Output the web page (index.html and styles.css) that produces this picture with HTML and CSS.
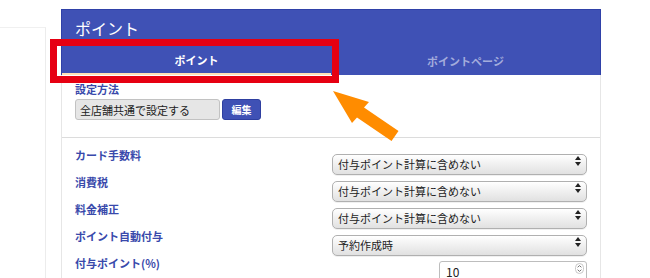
FILE: index.html
```html
<!DOCTYPE html>
<html lang="ja">
<head>
    <meta charset="UTF-8">
    <meta name="viewport" content="width=device-width, initial-scale=1.0">
    <title>ポイント</title>
    <link rel="stylesheet" href="styles.css">
</head>
<body>
    <div class="page">
        <aside class="side"></aside>

        <section class="card">
            <div class="card-head">
                <h1 class="card-title">ポイント</h1>
                <ul class="tabs">
                    <li class="tab active">ポイント</li>
                    <li class="tab">ポイントページ</li>
                </ul>
            </div>

            <div class="card-body">
                <div class="method">
                    <label class="field-label">設定方法</label>
                    <div class="method-row">
                        <input class="method-input" type="text" value="全店舗共通で設定する" readonly>
                        <button class="edit-btn">編集</button>
                    </div>
                </div>

                <div class="settings">
                    <div class="row">
                        <span class="field-label">カード手数料</span>
                        <div class="select-wrap">
                            <select><option>付与ポイント計算に含めない</option></select>
                            <span class="arrows"></span>
                        </div>
                    </div>
                    <div class="row">
                        <span class="field-label">消費税</span>
                        <div class="select-wrap">
                            <select><option>付与ポイント計算に含めない</option></select>
                            <span class="arrows"></span>
                        </div>
                    </div>
                    <div class="row">
                        <span class="field-label">料金補正</span>
                        <div class="select-wrap">
                            <select><option>付与ポイント計算に含めない</option></select>
                            <span class="arrows"></span>
                        </div>
                    </div>
                    <div class="row">
                        <span class="field-label">ポイント自動付与</span>
                        <div class="select-wrap">
                            <select><option>予約作成時</option></select>
                            <span class="arrows"></span>
                        </div>
                    </div>
                    <div class="row">
                        <span class="field-label">付与ポイント(%)</span>
                        <div class="number-wrap">
                            <input class="number-input" type="text" value="10">
                            <svg class="spin" width="9" height="11" viewBox="0 0 9 11">
                                <rect x="0.5" y="0.5" width="8" height="10" rx="4" fill="#fff" stroke="#c8c8c8"/>
                                <path d="M2.6 4.3 L4.5 2.6 L6.4 4.3 M2.6 6.7 L4.5 8.4 L6.4 6.7" fill="none" stroke="#666" stroke-width="0.9"/>
                            </svg>
                        </div>
                    </div>
                </div>
            </div>

            <div class="highlight"></div>
            <svg class="pointer" width="72" height="60" viewBox="0 0 72 60">
                <polygon points="2,2 38,13 33,18.6 67.5,42.1 60.5,51.9 26,28.4 21,34" fill="#ff8c00"/>
            </svg>
        </section>
    </div>
</body>
</html>
```

FILE: styles.css
```css
body {
    margin: 0;
    background-color: #fff;
    font-family: "Noto Sans CJK JP", "Noto Sans", sans-serif;
}
.page {
    display: flex;
    align-items: flex-start;
    gap: 15px;
}
.side {
    width: 45px;
    height: 260px;
    margin-top: 27px;
    border-top: 1px solid #f0f0f0;
    border-right: 1px solid #ececec;
}
.card {
    position: relative;
    width: 540px;
    margin-top: 9px;
}
.card-head {
    background-color: #3f51b5;
    border: 1px solid #2f41a8;
    border-bottom: none;
    padding-top: 8px;
}
.card-title {
    margin: 0 0 9px 13px;
    font-size: 16px;
    line-height: 20px;
    font-weight: normal;
    color: #fff;
}
.tabs {
    display: flex;
    list-style-type: none;
    margin: 0;
    padding: 0;
}
.tab {
    flex: 1;
    height: 28px;
    line-height: 28px;
    text-align: center;
    font-size: 11px;
    font-weight: bold;
    color: #a3acdc;
    box-sizing: border-box;
}
.tab.active {
    color: #fff;
    border-bottom: 2px solid #ffe2b8;
    line-height: 27px;
}
.card-body {
    border: 1px solid #e6e6e6;
    border-top: none;
    height: 210px;
}
.method {
    padding: 7px 13px 17px 13px;
    border-bottom: 1px solid #dcdcdc;
}
.field-label {
    display: block;
    font-size: 11px;
    line-height: 15px;
    font-weight: bold;
    color: #3949ab;
}
.method .field-label {
    margin-bottom: 2px;
}
.method-row {
    display: flex;
    gap: 2px;
}
.method-input {
    width: 145px;
    height: 21px;
    box-sizing: border-box;
    padding: 0 4px;
    font-family: inherit;
    font-size: 11px;
    color: #222;
    background-color: #e6e6e6;
    border: 1px solid #c2c2c2;
    border-radius: 3px;
}
.edit-btn {
    width: 39px;
    height: 21px;
    padding: 0;
    font-family: inherit;
    font-size: 10px;
    font-weight: bold;
    color: #fff;
    background-color: #3f51b5;
    border: 1px solid #2e3fa0;
    border-radius: 3px;
}
.settings {
    display: grid;
    grid-template-columns: 257px 1fr;
    row-gap: 6px;
    padding: 12px 13px 0 13px;
}
.row {
    display: contents;
}
.row .field-label {
    align-self: start;
    line-height: 10px;
}
.select-wrap {
    position: relative;
    height: 21px;
}
.select-wrap select {
    appearance: none;
    -webkit-appearance: none;
    width: 100%;
    height: 21px;
    box-sizing: border-box;
    padding: 0 20px 0 5px;
    font-family: inherit;
    font-size: 11px;
    color: #222;
    background: linear-gradient(#ffffff, #f1f1f1 45%, #e1e1e1);
    border: 1px solid #b0b0b0;
    border-radius: 5px;
    box-shadow: 0 1px 0 rgba(0, 0, 0, 0.06);
}
.arrows {
    position: absolute;
    right: 6px;
    top: 6px;
    width: 6px;
    height: 10px;
}
.arrows::before,
.arrows::after {
    content: "";
    position: absolute;
    left: 0;
    border-left: 3px solid transparent;
    border-right: 3px solid transparent;
}
.arrows::before {
    top: 0;
    border-bottom: 4px solid #222;
}
.arrows::after {
    bottom: 0;
    border-top: 4px solid #222;
}
.number-wrap {
    position: relative;
    justify-self: end;
    width: 148px;
    height: 22px;
}
.number-input {
    width: 100%;
    height: 22px;
    box-sizing: border-box;
    padding: 0 6px;
    font-family: inherit;
    font-size: 12px;
    color: #222;
    background-color: #fff;
    border: 1px solid #bdbdbd;
    border-radius: 3px;
}
.spin {
    position: absolute;
    right: 3px;
    top: 5px;
}
.highlight {
    position: absolute;
    left: -11px;
    top: 30px;
    width: 289px;
    height: 44px;
    box-sizing: border-box;
    border: 7px solid #e60012;
}
.pointer {
    position: absolute;
    left: 270px;
    top: 80px;
}
```
